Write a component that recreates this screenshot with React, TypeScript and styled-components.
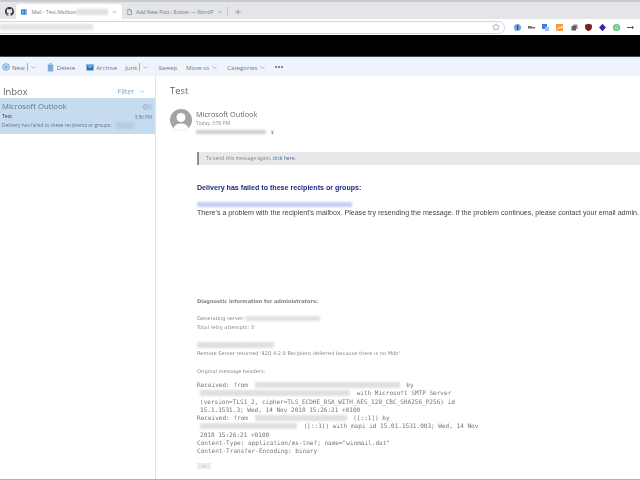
import React from 'react'
import styled, { createGlobalStyle } from 'styled-components'
import { ChevronDown, Plus, Star, X } from 'lucide-react'

const Global = createGlobalStyle`
  html, body { margin: 0; padding: 0; background: #fff; }
  body { font-family: "Open Sans", "Liberation Sans", sans-serif; }
`

const Page = styled.div`
  width: 640px;
  height: 480px;
  overflow: hidden;
  display: flex;
  flex-direction: column;
  border-bottom: 1px solid #a9b2bd;
  box-sizing: border-box;
  filter: blur(0.3px);
`

const TabStrip = styled.div`
  height: 19px;
  flex: none;
  box-sizing: border-box;
  border-top: 2px solid #c9cacd;
  background: #e4e5e9;
  display: flex;
  align-items: flex-end;
  padding-left: 3px;
`

const GitHubSlot = styled.div`
  width: 13px;
  height: 15px;
  display: flex;
  align-items: center;
  justify-content: center;
  color: #333;
`

const Tab = styled.div<{ $active?: boolean }>`
  width: ${(p) => (p.$active ? '106px' : '105px')};
  height: 15px;
  box-sizing: border-box;
  display: flex;
  align-items: center;
  gap: 4px;
  padding: 0 5px;
  background: ${(p) => (p.$active ? '#fff' : 'transparent')};
  border-radius: 3px 3px 0 0;
  font-size: 5.15px;
  color: #77797d;
  white-space: nowrap;
`

const TabTitle = styled.span`
  flex: 1;
  display: flex;
  align-items: center;
`

const NewTab = styled.div`
  display: flex;
  align-items: center;
  padding-left: 6px;
  color: #555;
  border-left: 1px solid #c4c5c9;
  height: 9px;
  margin-bottom: 3px;
`

const AddressBar = styled.div`
  height: 16px;
  flex: none;
  background: #fff;
  display: flex;
  align-items: center;
  padding-right: 4px;
`

const Omnibox = styled.div`
  width: 505px;
  height: 13px;
  flex: none;
  box-sizing: border-box;
  border: 1px solid #c5d6f2;
  border-left: none;
  border-radius: 0 7px 7px 0;
  display: flex;
  align-items: center;
  justify-content: space-between;
  padding-right: 4px;
  color: #666;
`

const Extensions = styled.div`
  flex: 1;
  display: flex;
  align-items: center;
  justify-content: space-between;
  padding: 0 1px 0 8px;
`

const Redaction = styled.div<{ $w: number; $h?: number; $c?: string }>`
  width: ${(p) => p.$w}px;
  height: ${(p) => p.$h ?? 6}px;
  flex: none;
  background: ${(p) => p.$c ?? '#e0e0e0'};
  filter: blur(1px);
`

const BlackBand = styled.div`
  height: 22px;
  flex: none;
  background: #000;
  border-bottom: 1px solid #4a4a4a;
  box-sizing: border-box;
`

const Toolbar = styled.div`
  height: 19px;
  flex: none;
  background: #eff4fc;
  display: flex;
  align-items: center;
  padding: 1px 0 0 2px;
  box-sizing: border-box;
  font-size: 6.1px;
  color: #777;
`

const ToolItem = styled.div<{ $ml: number }>`
  display: flex;
  align-items: center;
  gap: 2px;
  margin-left: ${(p) => p.$ml}px;
  white-space: nowrap;
`

const Divider = styled.span`
  width: 1px;
  height: 8px;
  background: #a4a9b0;
`

const Body = styled.div`
  flex: 1;
  min-height: 0;
  display: flex;
`

const ListPane = styled.div`
  width: 156px;
  flex: none;
  box-sizing: border-box;
  border-right: 1px solid #e3e3e3;
`

const ListHeader = styled.div`
  height: 22px;
  display: flex;
  align-items: center;
  justify-content: space-between;
  padding: 9px 9px 0 3px;
  box-sizing: border-box;
  color: #666;
  font-size: 9.4px;
`

const FilterLink = styled.span`
  display: flex;
  align-items: center;
  gap: 5px;
  font-size: 7px;
  color: #6ea0d8;
`

const MessageRow = styled.div`
  height: 36px;
  background: #c5dcf0;
  padding: 3px 3px 0 2px;
  box-sizing: border-box;
`

const RowLine = styled.div`
  display: flex;
  justify-content: space-between;
  align-items: center;
`

const Sender = styled.span`
  font-size: 7.7px;
  line-height: 11px;
  color: #6a7480;
`

const Subject = styled.span`
  font-size: 5.2px;
  line-height: 9px;
  color: #333;
`

const Time = styled.span`
  font-size: 4.6px;
  color: #6a7480;
`

const Preview = styled.div`
  display: flex;
  align-items: center;
  gap: 4px;
  font-size: 4.9px;
  line-height: 9px;
  color: #6a7480;
  white-space: nowrap;
`

const DetailPane = styled.div`
  flex: 1;
  min-width: 0;
  padding: 9px 0 0 14px;
  overflow: hidden;
`

const Title = styled.div`
  font-size: 9.4px;
  line-height: 12px;
  color: #666;
`

const Header = styled.div`
  display: flex;
  gap: 4px;
  margin-top: 12px;
`

const Avatar = styled.div`
  width: 22px;
  height: 22px;
  border-radius: 50%;
  overflow: hidden;
  background: #a4a4a4;
  flex: none;
`

const HeaderText = styled.div`
  display: flex;
  flex-direction: column;
`

const FromName = styled.div`
  font-size: 7.3px;
  line-height: 10px;
  color: #666;
`

const FromTime = styled.div`
  font-size: 4.8px;
  line-height: 8px;
  color: #8a8a8a;
`

const ToLine = styled.div`
  display: flex;
  align-items: center;
  gap: 5px;
  height: 7px;
  margin-top: 1px;
  font-size: 5px;
  color: #777;
`

const Message = styled.div`
  margin: 0 0 0 27px;
  white-space: nowrap;
`

const InfoBar = styled.div`
  margin-top: 17px;
  height: 13px;
  box-sizing: border-box;
  background: #e8e8e8;
  border-left: 2px solid #8f8f8f;
  padding-left: 7px;
  font-size: 5px;
  line-height: 13px;
  color: #888;
`

const InfoLink = styled.span`
  color: #3b6aa8;
`

const FailHeading = styled.div`
  margin-top: 18px;
  font-family: "Liberation Sans", Arial, sans-serif;
  font-weight: 700;
  font-size: 7.1px;
  line-height: 10px;
  color: #1f2a80;
`

const RecipientBlur = styled.div`
  margin-top: 9px;
  width: 155px;
  height: 5px;
  background: #c4cdf4;
  filter: blur(0.8px);
`

const Problem = styled.div`
  margin-top: 1px;
  font-family: "Liberation Sans", Arial, sans-serif;
  font-size: 7.1px;
  line-height: 10px;
  color: #444;
`

const DiagHeading = styled.div`
  margin-top: 79px;
  font-family: "DejaVu Sans", sans-serif;
  font-weight: 700;
  font-size: 5.05px;
  line-height: 8px;
  color: #7d7f88;
`

const DiagLine = styled.div<{ $mt?: number }>`
  display: flex;
  align-items: center;
  gap: 1px;
  margin-top: ${(p) => p.$mt ?? 0}px;
  font-family: "DejaVu Sans", sans-serif;
  font-size: 5.1px;
  line-height: 9px;
  color: #888;
  min-height: 9px;
`

const Headers = styled.div`
  margin-top: 5px;
  font-family: "DejaVu Sans Mono", monospace;
  font-size: 6.05px;
  line-height: 8.25px;
  color: #777;
`

const HeaderRow = styled.div<{ $indent?: number }>`
  display: flex;
  align-items: center;
  gap: 3px;
  height: 8.25px;
  padding-left: ${(p) => p.$indent ?? 0}px;
  white-space: pre;
`

const Ellipsis = styled.div`
  margin-top: 8px;
  width: 14px;
  height: 6px;
  background: #ececec;
  font-size: 5px;
  line-height: 4px;
  text-align: center;
  color: #555;
`

const GitHubIcon = () => (
  <svg width="9" height="9" viewBox="0 0 16 16" fill="currentColor">
    <path d="M8 0C3.58 0 0 3.58 0 8c0 3.54 2.29 6.53 5.47 7.59.4.07.55-.17.55-.38v-1.34c-2.23.48-2.7-1.07-2.7-1.07-.36-.92-.89-1.17-.89-1.17-.73-.5.05-.49.05-.49.8.06 1.23.83 1.23.83.71 1.23 1.87.87 2.33.66.07-.52.28-.87.51-1.07-1.78-.2-3.64-.89-3.64-3.95 0-.87.31-1.59.82-2.15-.08-.2-.36-1.02.08-2.12 0 0 .67-.21 2.2.82a7.6 7.6 0 0 1 4 0c1.53-1.04 2.2-.82 2.2-.82.44 1.1.16 1.92.08 2.12.51.56.82 1.27.82 2.15 0 3.07-1.87 3.75-3.65 3.95.29.25.54.73.54 1.48v2.2c0 .21.15.46.55.38A8 8 0 0 0 16 8c0-4.42-3.58-8-8-8z" />
  </svg>
)

const OutlookIcon = () => (
  <svg width="8" height="8" viewBox="0 0 8 8">
    <rect x="3" y="0.5" width="5" height="7" fill="#7fb2e5" />
    <rect x="0" y="1" width="5" height="6" fill="#1f6fc0" />
    <circle cx="2.5" cy="4" r="1.3" fill="none" stroke="#fff" strokeWidth="0.7" />
  </svg>
)

const PageIcon = () => (
  <svg width="7" height="8" viewBox="0 0 7 8" fill="none" stroke="#666" strokeWidth="0.7">
    <path d="M1 .5h3.2L6 2.3v5.2H1zM4 .5v2h2" />
  </svg>
)

const ExtIcon: React.FC<{ kind: number }> = ({ kind }) => {
  const icons = [
    <>
      <circle cx="4.5" cy="4.5" r="3.6" fill="#7aa7dc" />
      <rect x="4" y="2.2" width="1.2" height="4.6" fill="#24456e" />
    </>,
    <path d="M1 3h3l1 1h3v1.6H1z" fill="#6d6d6d" />,
    <>
      <rect x="1" y="1" width="5" height="5" fill="#3d7fe0" />
      <rect x="4" y="4" width="4" height="4" fill="#9cc0f2" />
    </>,
    <>
      <rect x="1" y="1" width="7" height="7" fill="#f09a4a" />
      <path d="M2 7l2-2.5h3V3" stroke="#fff" strokeWidth="0.9" fill="none" />
    </>,
    <>
      <rect x="3" y="1.5" width="4.5" height="4.5" fill="#8b8b8b" />
      <rect x="1.5" y="3" width="4.5" height="4.5" fill="#5e5e5e" />
    </>,
    <path d="M4.5.8l3.4 1v3c0 1.6-1.5 2.7-3.4 3.4C2.6 7.5 1.1 6.4 1.1 4.8v-3z" fill="#7c2020" />,
    <path d="M4.5.8l3.4 3.7-3.4 3.7-3.4-3.7z" fill="#3b22a8" />,
    <>
      <circle cx="4.5" cy="4.5" r="3.6" fill="#62c48a" />
      <circle cx="4.5" cy="4.5" r="1.5" fill="none" stroke="#d8f3e2" strokeWidth="0.8" />
    </>,
    <path d="M1 4h5V2.8l2 1.7-2 1.7V5H1z" fill="#555" />,
  ]
  return (
    <svg width="9" height="9" viewBox="0 0 9 9">
      {icons[kind]}
    </svg>
  )
}

const NewIcon = () => (
  <svg width="8" height="8" viewBox="0 0 8 8" fill="none" stroke="#3f86d0" strokeWidth="0.7">
    <circle cx="4" cy="4" r="3.3" fill="#d5e5f7" />
    <path d="M4 2v4M2 4h4" />
  </svg>
)

const TrashIcon = () => (
  <svg width="8" height="9" viewBox="0 0 8 9">
    <rect x="0.8" y="1.5" width="5.4" height="7" rx="0.5" fill="#7fa9dc" />
    <rect x="2" y="0.4" width="3" height="1" fill="#7fa9dc" />
  </svg>
)

const ArchiveIcon = () => (
  <svg width="8" height="8" viewBox="0 0 8 8">
    <rect x="0.5" y="1" width="7" height="6.5" fill="#2b74bd" />
    <rect x="0.5" y="1" width="7" height="1.6" fill="#8ab8e6" />
    <rect x="2.5" y="3.5" width="3" height="0.8" fill="#fff" />
  </svg>
)

const MoreDots = () => (
  <svg width="8" height="2" viewBox="0 0 8 2" fill="#4a4f57">
    <circle cx="1" cy="1" r="0.9" />
    <circle cx="4" cy="1" r="0.9" />
    <circle cx="7" cy="1" r="0.9" />
  </svg>
)

const RowActions = () => (
  <svg width="9" height="6" viewBox="0 0 9 6" fill="none" stroke="#8b98a5" strokeWidth="0.6">
    <circle cx="3" cy="3" r="2.5" />
    <path d="M1.5 3h3M6.5 1h2M6.5 3h2M6.5 5h2" />
  </svg>
)

const AvatarArt = () => (
  <svg width="22" height="22" viewBox="0 0 22 22">
    <circle cx="11" cy="8.5" r="4.5" fill="#fff" />
    <path d="M3 21c1-5 4-6.5 8-6.5S18 16 19 21v1H3z" fill="#fff" />
  </svg>
)

const Chevron = () => <ChevronDown size={7} strokeWidth={1.6} color="#66707c" />

const extensions = [0, 1, 2, 3, 4, 5, 6, 7, 8]

export default function App() {
  return (
    <Page>
      <Global />
      <TabStrip>
        <GitHubSlot>
          <GitHubIcon />
        </GitHubSlot>
        <Tab $active>
          <OutlookIcon />
          <TabTitle>
            Mail - Test.Mailbox
            <Redaction $w={32} />
          </TabTitle>
          <X size={6} strokeWidth={1.5} color="#555" />
        </Tab>
        <Tab>
          <PageIcon />
          <TabTitle>Add New Post ‹ Evotec — WordP</TabTitle>
          <X size={6} strokeWidth={1.5} color="#555" />
        </Tab>
        <NewTab>
          <Plus size={8} strokeWidth={1.4} />
        </NewTab>
      </TabStrip>

      <AddressBar>
        <Omnibox>
          <Redaction $w={93} $c="#e4e4e4" />
          <Star size={8} strokeWidth={1.4} />
        </Omnibox>
        <Extensions>
          {extensions.map((k) => (
            <ExtIcon key={k} kind={k} />
          ))}
        </Extensions>
      </AddressBar>

      <BlackBand />

      <Toolbar>
        <ToolItem $ml={0}>
          <NewIcon />
          New
          <Divider />
          <Chevron />
        </ToolItem>
        <ToolItem $ml={10}>
          <TrashIcon />
          Delete
        </ToolItem>
        <ToolItem $ml={11}>
          <ArchiveIcon />
          Archive
        </ToolItem>
        <ToolItem $ml={8}>
          Junk
          <Divider />
          <Chevron />
        </ToolItem>
        <ToolItem $ml={9}>Sweep</ToolItem>
        <ToolItem $ml={9}>
          Move to
          <Chevron />
        </ToolItem>
        <ToolItem $ml={9}>
          Categories
          <Chevron />
        </ToolItem>
        <ToolItem $ml={9}>
          <MoreDots />
        </ToolItem>
      </Toolbar>

      <Body>
        <ListPane>
          <ListHeader>
            Inbox
            <FilterLink>
              Filter
              <ChevronDown size={7} strokeWidth={1.6} color="#5f96d6" />
            </FilterLink>
          </ListHeader>
          <MessageRow>
            <RowLine>
              <Sender>Microsoft Outlook</Sender>
              <RowActions />
            </RowLine>
            <RowLine>
              <Subject>Test</Subject>
              <Time>3:56 PM</Time>
            </RowLine>
            <Preview>
              Delivery has failed to these recipients or groups:
              <Redaction $w={18} $h={7} $c="#b9cce0" />
            </Preview>
          </MessageRow>
        </ListPane>

        <DetailPane>
          <Title>Test</Title>
          <Header>
            <Avatar>
              <AvatarArt />
            </Avatar>
            <HeaderText>
              <FromName>Microsoft Outlook</FromName>
              <FromTime>Today, 3:56 PM</FromTime>
              <ToLine>
                <Redaction $w={70} $h={4} $c="#cfcfcf" />
                ¥
              </ToLine>
            </HeaderText>
          </Header>
          <Message>
            <InfoBar>
              To send this message again, <InfoLink>click here.</InfoLink>
            </InfoBar>
            <FailHeading>Delivery has failed to these recipients or groups:</FailHeading>
            <RecipientBlur />
            <Problem>
              There's a problem with the recipient's mailbox. Please try resending the message. If
              the problem continues, please contact your email admin.
            </Problem>
            <DiagHeading>Diagnostic information for administrators:</DiagHeading>
            <DiagLine $mt={9}>
              Generating server:
              <Redaction $w={74} $h={5} />
            </DiagLine>
            <DiagLine>Total retry attempts: 3</DiagLine>
            <DiagLine $mt={8}>
              <Redaction $w={77} />
            </DiagLine>
            <DiagLine>
              Remote Server returned '420 4.2.0 Recipient deferred because there is no Mdb'
            </DiagLine>
            <DiagLine $mt={9}>Original message headers:</DiagLine>
            <Headers>
              <HeaderRow>
                Received: from <Redaction $w={145} /> by
              </HeaderRow>
              <HeaderRow $indent={3}>
                <Redaction $w={150} /> with Microsoft SMTP Server
              </HeaderRow>
              <HeaderRow $indent={3}>
                (version=TLS1_2, cipher=TLS_ECDHE_RSA_WITH_AES_128_CBC_SHA256_P256) id
              </HeaderRow>
              <HeaderRow $indent={3}>15.1.1531.3; Wed, 14 Nov 2018 15:26:21 +0100</HeaderRow>
              <HeaderRow>
                Received: from <Redaction $w={92} /> ([::1]) by
              </HeaderRow>
              <HeaderRow $indent={3}>
                <Redaction $w={97} /> ([::1]) with mapi id 15.01.1531.003; Wed, 14 Nov
              </HeaderRow>
              <HeaderRow $indent={3}>2018 15:26:21 +0100</HeaderRow>
              <HeaderRow>Content-Type: application/ms-tnef; name="winmail.dat"</HeaderRow>
              <HeaderRow>Content-Transfer-Encoding: binary</HeaderRow>
            </Headers>
            <Ellipsis>...</Ellipsis>
          </Message>
        </DetailPane>
      </Body>
    </Page>
  )
}
